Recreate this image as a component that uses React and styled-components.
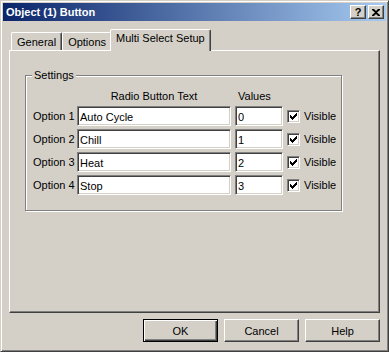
import styled, { createGlobalStyle } from "styled-components";

const options = [
  { id: 1, text: "Auto Cycle", value: "0", visible: true },
  { id: 2, text: "Chill", value: "1", visible: true },
  { id: 3, text: "Heat", value: "2", visible: true },
  { id: 4, text: "Stop", value: "3", visible: true },
];

const tabs = ["General", "Options", "Multi Select Setup"];

export default function App() {
  return (
    <>
      <GlobalStyle />
      <StyledWindow>
        <StyledTitleBar>
          <StyledTitle>Object (1) Button</StyledTitle>
          <StyledCaptionButtons>
            <StyledCaptionButton aria-label="Help">?</StyledCaptionButton>
            <StyledCaptionButton aria-label="Close">
              <svg width="8" height="7" viewBox="0 0 8 7">
                <path
                  d="M0 0h2l2 2 2-2h2v1L5 3.5 8 6v1H6L4 5 2 7H0V6l3-2.5L0 1z"
                  fill="#000"
                />
              </svg>
            </StyledCaptionButton>
          </StyledCaptionButtons>
        </StyledTitleBar>
        <StyledBody>
          <StyledTabRow>
            {tabs.map((tab) => (
              <StyledTab key={tab} $active={tab === "Multi Select Setup"}>
                {tab}
              </StyledTab>
            ))}
          </StyledTabRow>
          <StyledPanel>
            <StyledGroup>
              <StyledLegend>Settings</StyledLegend>
              <StyledGrid>
                <span />
                <StyledHeader $align="center">Radio Button Text</StyledHeader>
                <StyledHeader $align="left">Values</StyledHeader>
                <span />
                <span />
                {options.map((option) => (
                  <StyledRow key={option.id}>
                    <StyledLabel>Option {option.id}</StyledLabel>
                    <StyledInput defaultValue={option.text} />
                    <StyledInput defaultValue={option.value} />
                    <StyledCheck>
                      {option.visible && (
                        <svg width="7" height="7" viewBox="0 0 7 7">
                          <path
                            d="M0 2h1v1h1v1h1V3h1V2h1V1h1V0h1v3H6v1H5v1H4v1H3v1H2V6H1V5H0z"
                            fill="#000"
                          />
                        </svg>
                      )}
                    </StyledCheck>
                    <StyledLabel>Visible</StyledLabel>
                  </StyledRow>
                ))}
              </StyledGrid>
            </StyledGroup>
          </StyledPanel>
          <StyledButtonRow>
            <StyledButton $default>OK</StyledButton>
            <StyledButton>Cancel</StyledButton>
            <StyledButton>Help</StyledButton>
          </StyledButtonRow>
        </StyledBody>
      </StyledWindow>
    </>
  );
}

const GlobalStyle = createGlobalStyle`
  body {
    margin: 0;
    background: #d4d0c8;
    font-family: "Liberation Sans", Arial, sans-serif;
    font-size: 11px;
    color: #000;
  }
`;

const StyledWindow = styled.div`
  box-sizing: border-box;
  width: 389px;
  height: 352px;
  padding: 2px;
  background: #d4d0c8;
  border: 1px solid;
  border-color: #d4d0c8 #404040 #404040 #d4d0c8;
  box-shadow: inset 1px 1px 0 #fff, inset -1px -1px 0 #808080;
  display: flex;
  flex-direction: column;
`;

const StyledTitleBar = styled.div`
  height: 18px;
  display: flex;
  align-items: center;
  justify-content: space-between;
  padding: 0 2px 0 3px;
  background: linear-gradient(to right, #0a246a, #a6caf0);
`;

const StyledTitle = styled.span`
  color: #fff;
  font-weight: bold;
  font-size: 11px;
  line-height: 13px;
`;

const StyledCaptionButtons = styled.div`
  display: flex;
  gap: 2px;
`;

const StyledCaptionButton = styled.button`
  box-sizing: border-box;
  width: 16px;
  height: 14px;
  padding: 0;
  display: flex;
  align-items: center;
  justify-content: center;
  background: #d4d0c8;
  border: 1px solid;
  border-color: #fff #404040 #404040 #fff;
  box-shadow: inset -1px -1px 0 #808080;
  font-family: "Liberation Sans", Arial, sans-serif;
  font-weight: bold;
  font-size: 11px;
  line-height: 11px;
  color: #000;
`;

const StyledBody = styled.div`
  flex: 1;
  display: flex;
  flex-direction: column;
  padding: 8px 6px 0 6px;
`;

const StyledTabRow = styled.div`
  display: flex;
  align-items: flex-end;
  height: 21px;
  padding-left: 2px;
  position: relative;
  z-index: 1;
`;

const StyledTab = styled.div`
  box-sizing: border-box;
  height: ${(p) => (p.$active ? "22px" : "18px")};
  margin: ${(p) => (p.$active ? "0 -2px -1px -2px" : "0")};
  padding: ${(p) => (p.$active ? "2px 5px 0 5px" : "3px 5px 0 5px")};
  background: #d4d0c8;
  border-top: 1px solid #fff;
  border-left: 1px solid #fff;
  border-right: 1px solid #404040;
  border-radius: 2px 2px 0 0;
  box-shadow: inset -1px 0 0 #808080;
  line-height: 13px;
  white-space: nowrap;
  position: relative;
  z-index: ${(p) => (p.$active ? 2 : 0)};
`;

const StyledPanel = styled.div`
  box-sizing: border-box;
  height: 263px;
  padding: 18px 0 0 15px;
  background: #d4d0c8;
  border: 1px solid;
  border-color: #fff #404040 #404040 #fff;
  box-shadow: inset -1px -1px 0 #808080;
`;

const StyledGroup = styled.fieldset`
  box-sizing: border-box;
  width: 317px;
  height: 142px;
  margin: 0;
  padding: 8px 0 0 6px;
  border: 1px solid #808080;
  box-shadow: 1px 1px 0 #fff, inset 1px 1px 0 #fff;
`;

const StyledLegend = styled.legend`
  padding: 0 2px;
  line-height: 13px;
  background: #d4d0c8;
`;

const StyledGrid = styled.div`
  display: grid;
  grid-template-columns: 40px 154px 48px 13px auto;
  column-gap: 4px;
  row-gap: 3px;
  padding-left: 1px;
  align-items: center;
`;

const StyledRow = styled.div`
  display: contents;
`;

const StyledHeader = styled.span`
  text-align: ${(p) => p.$align};
  padding-left: ${(p) => (p.$align === "left" ? "3px" : "0")};
  line-height: 13px;
`;

const StyledLabel = styled.span`
  white-space: nowrap;
  line-height: 13px;
`;

const StyledInput = styled.input`
  box-sizing: border-box;
  width: 100%;
  height: 20px;
  margin: 0;
  padding: 1px 2px 0 2px;
  border: 1px solid;
  border-color: #808080 #fff #fff #808080;
  box-shadow: inset 1px 1px 0 #404040, inset -1px -1px 0 #d4d0c8;
  background: #fff;
  font-family: "Liberation Sans", Arial, sans-serif;
  font-size: 11px;
  color: #000;
  outline: none;
`;

const StyledCheck = styled.span`
  box-sizing: border-box;
  width: 13px;
  height: 13px;
  display: flex;
  align-items: center;
  justify-content: center;
  background: #fff;
  border: 1px solid;
  border-color: #808080 #fff #fff #808080;
  box-shadow: inset 1px 1px 0 #404040, inset -1px -1px 0 #d4d0c8;
`;

const StyledButtonRow = styled.div`
  display: flex;
  justify-content: flex-end;
  gap: 6px;
  margin-top: 6px;
`;

const StyledButton = styled.button`
  box-sizing: border-box;
  width: 75px;
  height: 23px;
  padding: 0;
  background: #d4d0c8;
  border: 1px solid;
  border-color: ${(p) =>
    p.$default ? "#000" : "#fff #404040 #404040 #fff"};
  box-shadow: ${(p) =>
    p.$default
      ? "inset 1px 1px 0 #fff, inset -1px -1px 0 #404040, inset -2px -2px 0 #808080"
      : "inset -1px -1px 0 #808080"};
  font-family: "Liberation Sans", Arial, sans-serif;
  font-size: 11px;
  color: #000;
`;
